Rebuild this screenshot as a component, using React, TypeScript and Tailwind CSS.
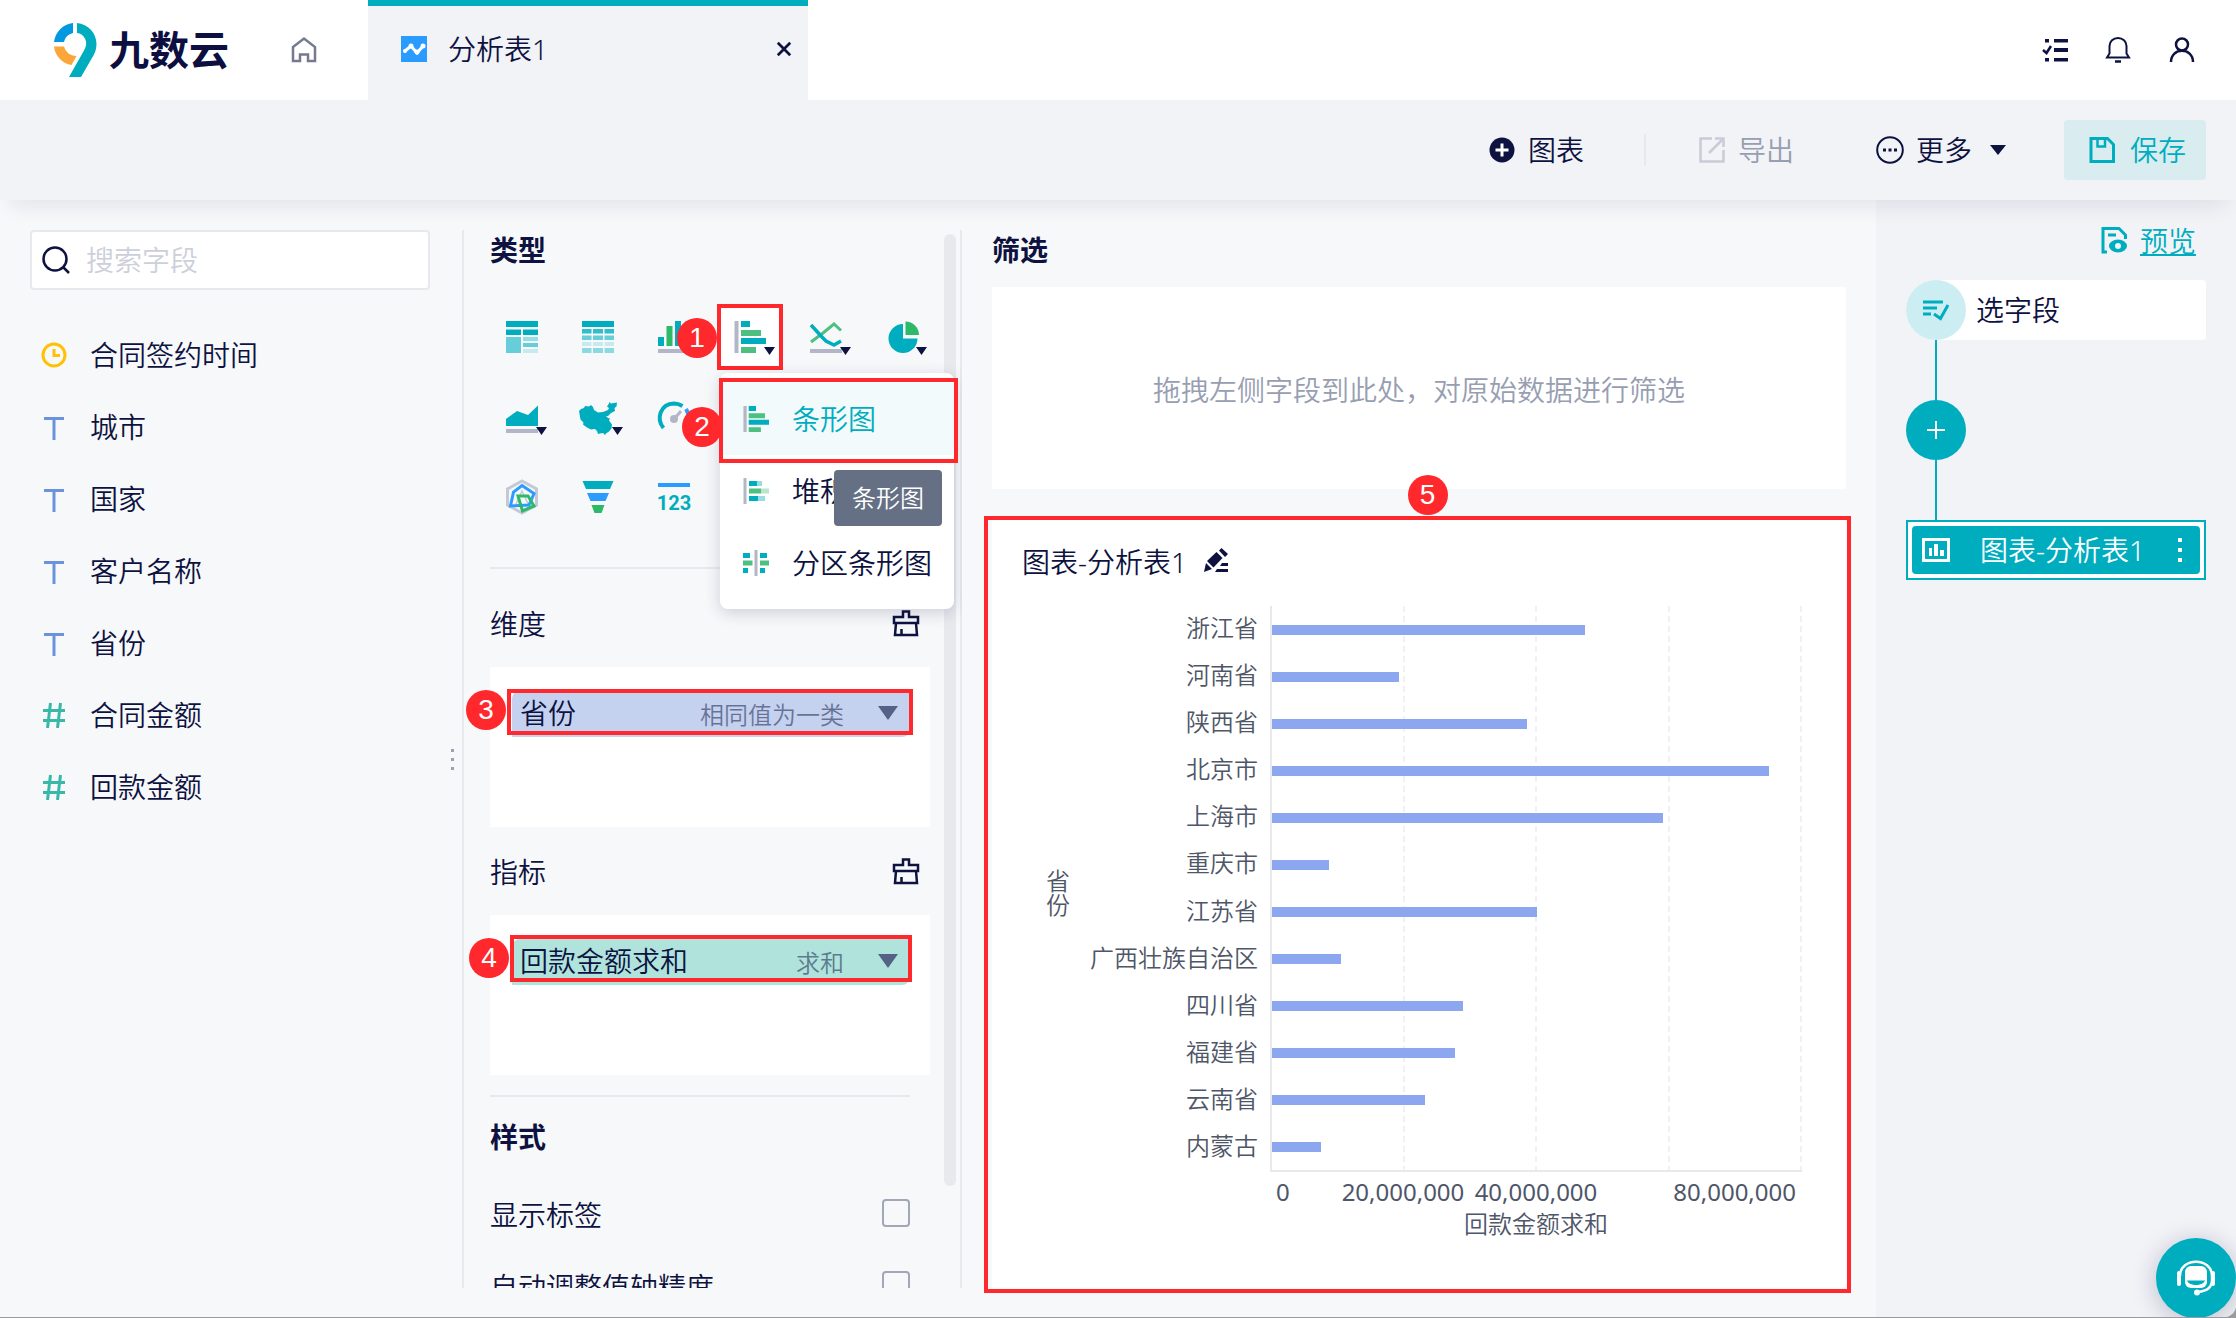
import type { ReactNode } from 'react'

const fields = [
  { type: 'date', label: '合同签约时间' },
  { type: 'text', label: '城市' },
  { type: 'text', label: '国家' },
  { type: 'text', label: '客户名称' },
  { type: 'text', label: '省份' },
  { type: 'number', label: '合同金额' },
  { type: 'number', label: '回款金额' },
]

const AXIS_MAX = 80000000

const chartData = [
  { name: '浙江省', value: 47200000 },
  { name: '河南省', value: 19200000 },
  { name: '陕西省', value: 38500000 },
  { name: '北京市', value: 75000000 },
  { name: '上海市', value: 59000000 },
  { name: '重庆市', value: 8600000 },
  { name: '江苏省', value: 40000000 },
  { name: '广西壮族自治区', value: 10400000 },
  { name: '四川省', value: 28800000 },
  { name: '福建省', value: 27600000 },
  { name: '云南省', value: 23100000 },
  { name: '内蒙古', value: 7400000 },
]

const TEAL = '#00adbf'
const GREEN = '#4dbf80'
const GREY = '#b3b6c6'

function Badge({ n, className }: { n: number; className: string }) {
  return (
    <span
      className={`absolute z-40 flex size-10 items-center justify-center rounded-full bg-[#ff282c] font-['Liberation_Sans',sans-serif] text-[28px] leading-10 text-white ${className}`}
    >
      {n}
    </span>
  )
}

function Logo() {
  return (
    <a href="#" className="flex items-center gap-3 text-[40px] leading-[50px] font-bold text-[#0c0f40]">
      <svg width="43" height="54" viewBox="0 0 43 54" aria-hidden="true">
        <path fill={TEAL} d="M23 0C34 1 42.5 10 42.5 21c0 6-2 10-4.500 14L27 54H15L30 27.500c2.300-4 3-7.500 1.300-11.200C29.700 12.500 26.500 10.300 23 10Z" />
        <path fill="#0098e0" d="M19 0V10A12 12 0 0 0 10 19H0A21.500 21.500 0 0 1 19 0Z" />
        <path fill="#fba63a" d="M0 23.500H10A12 12 0 0 0 22.500 33L17.500 42A21 21 0 0 1 0 23.500Z" />
      </svg>
      <span>九数云</span>
    </a>
  )
}

function FieldIcon({ type }: { type: string }) {
  if (type === 'date') {
    return (
      <svg width="26" height="26" viewBox="0 0 26 26" fill="none" stroke="#ffc100" aria-hidden="true">
        <circle cx="13" cy="13" r="11" strokeWidth="3" />
        <path d="M13 7v6.500h6" strokeWidth="3" />
      </svg>
    )
  }
  if (type === 'text') {
    return (
      <svg width="26" height="26" viewBox="0 0 26 26" fill="none" stroke="#6b93dc" strokeWidth="3" aria-hidden="true">
        <path d="M3 4.500h20M13 4.500V26" />
      </svg>
    )
  }
  return (
    <svg width="26" height="26" viewBox="0 0 26 26" fill="none" stroke="#37b8a8" strokeWidth="3" aria-hidden="true">
      <path d="M2 8.500h22M2 18.500h22M9.500 1 6.500 26M19.500 1 16.500 26" />
    </svg>
  )
}

function BarIcon({ size = 32 }: { size?: number }) {
  return (
    <svg width={size} height={size} viewBox="0 0 32 32" aria-hidden="true">
      <path fill={GREY} d="M.5 0h4v32h-4z" />
      <path fill={TEAL} d="M7 0h9v6H7zM7 17h25v6H7z" />
      <path fill={GREEN} d="M7 9h20v6H7zM7 26h15v6H7z" />
    </svg>
  )
}

function StackedBarIcon() {
  return (
    <svg width="26" height="26" viewBox="0 0 26 26" aria-hidden="true">
      <path fill={GREY} d="M.5 0h3v26h-3z" />
      <path fill={TEAL} d="M6 3h8v5H6zM6 18h9v5H6z" />
      <path fill="#99dde4" d="M14 3h5v5h-5zM15 18h7v5h-7z" />
      <path fill={GREEN} d="M6 10.500h12v5H6z" />
      <path fill="#b8e5cc" d="M18 10.500h8v5h-8z" />
    </svg>
  )
}

function SplitBarIcon() {
  return (
    <svg width="26" height="26" viewBox="0 0 26 26" aria-hidden="true">
      <path fill={GREY} d="M11.500 0h3v26h-3z" />
      <path fill={TEAL} d="M0 3h7v5H0zM17 3h7v5h-7zM0 18h5v5H0zM17 18h5v5h-5z" />
      <path fill={GREEN} d="M0 10.500h9.500v5H0zM17 10.500h9v5h-9z" />
    </svg>
  )
}

function TypeSvg({ children }: { children: ReactNode }) {
  return (
    <svg width="32" height="32" viewBox="0 0 32 32" className="overflow-visible" aria-hidden="true">
      {children}
    </svg>
  )
}

const chartTypes: { name: string; caret?: boolean; newRow?: boolean; icon: ReactNode }[] = [
  {
    name: '分组表',
    icon: (
      <TypeSvg>
        <path fill={TEAL} d="M0 0h32v6H0zM0 8.500h15V14H0zM17 8.500h15V14H17z" />
        <path fill="#66ced9" d="M0 16h15v16H0zM17 22h15v4H17z" />
        <path fill="#99dde4" d="M17 16h15v4H17z" />
        <path fill="#c8eaee" d="M17 28h15v4H17z" />
      </TypeSvg>
    ),
  },
  {
    name: '明细表',
    icon: (
      <TypeSvg>
        <path fill={TEAL} d="M0 0h32v6H0z" />
        <path fill="#33bdcb" d="M0 8h9.500v4.500H0zM11 8h10v4.500H11zM22.500 8H32v4.500h-9.500z" />
        <path fill="#66ced9" d="M0 14.500h9.500V19H0zM11 14.500h10V19H11zM22.500 14.500H32V19h-9.500z" />
        <path fill="#c8eaee" d="M0 21h9.500v4H0zM11 21h10v4H11zM22.500 21H32v4h-9.500z" />
        <path fill="#8bdae2" d="M0 27h9.500v5H0zM11 27h10v5H11zM22.500 27H32v5h-9.500z" />
      </TypeSvg>
    ),
  },
  {
    name: '柱形图',
    icon: (
      <TypeSvg>
        <path fill={GREY} d="M0 28h32v4H0z" />
        <path fill={TEAL} d="M0 16h6v9H0zM17 0h6v25h-6z" />
        <path fill="#2cb968" d="M8.500 5h6v20h-6z" />
      </TypeSvg>
    ),
  },
  { name: '条形图', caret: true, icon: <BarIcon /> },
  {
    name: '折线图',
    caret: true,
    icon: (
      <TypeSvg>
        <path fill={GREY} d="M0 28h32v4H0z" />
        <path fill="none" stroke={GREEN} strokeWidth="3" d="m1 21 12-9L24 3l7 6.500" />
        <path fill="none" stroke={TEAL} strokeWidth="3.500" d="m1 4 11 12 4 4 8 4 7-4" />
      </TypeSvg>
    ),
  },
  {
    name: '饼图',
    caret: true,
    icon: (
      <TypeSvg>
        <path fill={TEAL} d="M17 3a14.500 14.500 0 1 0 14.500 14.500H17Z" />
        <path fill="#2cb968" d="M19.500.5V14H33A13.500 13.500 0 0 0 19.500.5Z" />
      </TypeSvg>
    ),
  },
  {
    name: '面积图',
    caret: true,
    icon: (
      <TypeSvg>
        <path fill={TEAL} d="M0 18 11 10l11 4L32 4.500V25H0z" />
        <path fill={GREY} d="M0 28h32v4H0z" />
      </TypeSvg>
    ),
  },
  {
    name: '地图',
    caret: true,
    icon: (
      <TypeSvg>
        <path
          fill={TEAL}
          d="m-3 10 2-2 3-1 1-2 4 .5 2-1.500 2 2 1 3 4 2.500 5-.5 5-2 1-2-2-1.500 2-3L27 1l2 1.500 6-1-.5 4-2 1.500.5 3-4 2-3 3h-2l2 2 2 .5-1 2 3 4-.5 4-2.500 3-3 2-1 1.500-2-2-3 .5-2 .5-1-3-2-2-4 .5-4-2-4-3 .5-2-3-3z"
        />
      </TypeSvg>
    ),
  },
  {
    name: '仪表盘',
    icon: (
      <TypeSvg>
        <path fill="none" stroke={TEAL} strokeWidth="4" d="M5.500 27C-2 18 2 3 16 2.500c4 0 6 1 8.500 2.500" />
        <path fill="none" stroke="#2b9cff" strokeWidth="4" d="M28 8c2 3 3 6 2.500 10" />
        <circle cx="16" cy="18" r="4" fill={GREY} />
        <path stroke={GREY} strokeWidth="3" d="m17 17 6-7" />
      </TypeSvg>
    ),
  },
  {
    name: '雷达图',
    newRow: true,
    icon: (
      <TypeSvg>
        <g fill="none">
          <path stroke="#c6c9d5" strokeWidth="3" d="m16 0 14.500 8v16L16 32 1.500 24V8z" />
          <path stroke="#c6c9d5" strokeWidth="1.500" d="m9 25 7-15 7 15" />
          <path stroke="#2b9cff" strokeWidth="3" d="m16 4.500 12 8L23 24 4.500 25 7.500 11z" />
          <path stroke="#2cb968" strokeWidth="3" d="M12 15h10l6 10-11.500 5z" />
        </g>
      </TypeSvg>
    ),
  },
  {
    name: '漏斗图',
    icon: (
      <TypeSvg>
        <path fill={TEAL} d="M.5 0h31l-3.500 8H4z" />
        <path fill="#2b9cff" d="M5 12h22l-3.500 8h-15z" />
        <path fill="#2cb968" d="M9.500 24h13l-3 8h-7z" />
      </TypeSvg>
    ),
  },
  {
    name: '指标卡',
    icon: (
      <span className="flex w-8 flex-col items-center gap-1 pt-1">
        <span className="h-1 w-8 bg-[#2b9cff]" />
        <span className="font-['Roboto',sans-serif] text-xl leading-6 font-bold text-[#00adbf]">123</span>
      </span>
    ),
  },
]

function Caret({ className }: { className: string }) {
  return (
    <svg viewBox="0 0 12 8" preserveAspectRatio="none" fill="currentColor" className={className} aria-hidden="true">
      <path d="M0 0h12L6 8z" />
    </svg>
  )
}

function Header() {
  return (
    <header className="flex h-[100px] shrink-0 items-center bg-white pr-10 pl-[54px]">
      <Logo />
      <button type="button" aria-label="首页" className="ml-[61px] text-[#747a92]">
        <svg width="28" height="28" viewBox="0 0 28 28" fill="none" stroke="currentColor" strokeWidth="2.500" aria-hidden="true">
          <path d="M3 11 14 2.500 25 11v14h-7v-6.500h-8V25H3z" />
        </svg>
      </button>
      <div className="ml-[50px] flex h-full w-[440px] items-center border-t-6 border-[#00adbf] bg-[#f2f3f7] pr-4 pb-2 pl-8">
        <svg width="28" height="28" viewBox="0 0 28 28" aria-hidden="true">
          <path fill="#2b9cff" d="M1 1h26v26H1z" />
          <path d="m5 16 6-5 6 7 6-7" fill="none" stroke="#fff" strokeWidth="3" strokeLinecap="round" />
          <g fill="#fff">
            <circle cx="5" cy="16" r="2" />
            <circle cx="11" cy="11" r="2.500" />
            <circle cx="17" cy="17" r="2.500" />
            <circle cx="23" cy="11" r="2.500" />
          </g>
        </svg>
        <span className="ml-5 flex-1">分析表1</span>
        <button type="button" aria-label="关闭">
          <svg width="16" height="16" viewBox="0 0 18 18" stroke="currentColor" strokeWidth="3" aria-hidden="true">
            <path d="m2 2 14 14M16 2 2 16" />
          </svg>
        </button>
      </div>
      <div className="ml-auto flex items-center gap-9">
        <button type="button" aria-label="任务">
          <svg width="28" height="28" viewBox="0 0 28 28" aria-hidden="true">
            <path fill="currentColor" d="M14 3h14v3.500H14zM14 12h14v4H14zM14 22h14v3.500H14zM5 3h4v3.500H5zM5 22h4v3.500H5z" />
            <path d="m3 14 3.500 3L11 10" fill="none" stroke="currentColor" strokeWidth="2.500" />
          </svg>
        </button>
        <button type="button" aria-label="通知">
          <svg width="28" height="28" viewBox="0 0 28 28" fill="none" stroke="currentColor" strokeWidth="2" aria-hidden="true">
            <path d="M3 21.500h22l-2.500-4V10a8.500 8 0 0 0-17 0v7.500z" />
            <path d="M11 25.500h6" strokeWidth="2.500" />
          </svg>
        </button>
        <button type="button" aria-label="账户">
          <svg width="28" height="28" viewBox="0 0 28 28" fill="none" stroke="currentColor" strokeWidth="2.500" aria-hidden="true">
            <circle cx="14" cy="8.500" r="6" />
            <path d="M3 26c0-15 22-15 22 0" />
          </svg>
        </button>
      </div>
    </header>
  )
}

function Toolbar() {
  return (
    <div className="relative z-10 flex h-[100px] shrink-0 items-center justify-end bg-[#f2f3f7] pr-[30px] shadow-[0_16px_20px_-10px_rgba(20,27,70,0.09)]">
      <button type="button" className="flex items-center gap-3">
        <svg width="28" height="28" viewBox="0 0 28 28" aria-hidden="true">
          <circle cx="14" cy="14" r="12.500" fill="currentColor" />
          <path d="M14 7.500v13M7.500 14h13" stroke="#fff" strokeWidth="3" />
        </svg>
        图表
      </button>
      <span className="ml-[60px] h-8 w-0.5 bg-[#e8e9ed]" />
      <button type="button" className="ml-[52px] flex items-center gap-3 text-[#979eb1]">
        <svg width="28" height="28" viewBox="0 0 28 28" fill="none" stroke="#c9ccd6" strokeWidth="2.500" aria-hidden="true">
          <path d="M14 2.500H2.500v23h23V14M17 2.500h8.500V11M25 3 11 17" />
        </svg>
        导出
      </button>
      <button type="button" className="ml-[82px] flex items-center gap-3">
        <svg width="28" height="28" viewBox="0 0 28 28" aria-hidden="true">
          <circle cx="14" cy="14" r="12.800" fill="none" stroke="currentColor" strokeWidth="2" />
          <path fill="currentColor" d="M7 12.500h3v3H7zM12.500 12.500h3v3h-3zM18 12.500h3v3h-3z" />
        </svg>
        更多
        <Caret className="ml-[6px] h-[10px] w-4" />
      </button>
      <button type="button" className="ml-[58px] flex h-[60px] items-center gap-[14px] rounded bg-[#d9ecef] pr-5 pl-6 text-[#00adbf]">
        <svg width="28" height="28" viewBox="0 0 28 28" fill="none" stroke="currentColor" strokeWidth="3" aria-hidden="true">
          <path d="M3 2.500h16.500l6 6v17H3z" />
          <path d="M9.500 3v7.500H17V3" strokeWidth="2.500" />
        </svg>
        保存
      </button>
    </div>
  )
}

function FieldPanel() {
  return (
    <aside className="flex w-[462px] shrink-0 items-center pr-2 pl-[30px]">
      <div className="h-full flex-1">
        <label className="mr-5 flex h-[60px] items-center gap-4 rounded border-2 border-[#e8e9ed] bg-white pl-[10px]">
          <svg width="28" height="28" viewBox="0 0 28 28" fill="none" stroke="currentColor" strokeWidth="2.500" className="shrink-0" aria-hidden="true">
            <circle cx="13" cy="13" r="11.500" />
            <path d="m21 21 6 6" />
          </svg>
          <input
            type="search"
            aria-label="搜索字段"
            placeholder="搜索字段"
            className="w-full min-w-0 bg-transparent outline-none placeholder:text-[#cdcfda]"
          />
        </label>
        <ul className="mt-[29px]">
          {fields.map((field) => (
            <li key={field.label} className="flex h-[72px] items-center gap-[23px] pl-[11px]">
              <FieldIcon type={field.type} />
              {field.label}
            </li>
          ))}
        </ul>
      </div>
      <div className="flex w-1 flex-col items-center gap-[6px]">
        <span className="size-[3px] bg-[#9aa1b3]" />
        <span className="size-[3px] bg-[#9aa1b3]" />
        <span className="size-[3px] bg-[#9aa1b3]" />
      </div>
    </aside>
  )
}

function BarTypeMenu() {
  return (
    <div className="absolute top-[66px] left-0 z-30 w-[234px] rounded-lg bg-white py-[10px] text-left shadow-[0_4px_16px_rgba(20,27,70,0.18)]">
      <button type="button" className="relative flex h-[72px] w-full items-center gap-[23px] bg-[#f2fafb] pl-[23px] text-[#00adbf]">
        <BarIcon size={26} />
        条形图
        <span className="absolute -top-[5px] -right-1 -bottom-2 -left-px border-4 border-[#ff282c]" />
        <Badge n={2} className="top-6 -left-[38px]" />
      </button>
      <button type="button" className="flex h-[72px] w-full items-center gap-[23px] pl-[23px] whitespace-nowrap">
        <StackedBarIcon />
        堆积
      </button>
      <button type="button" className="flex h-[72px] w-full items-center gap-[23px] pl-[23px] whitespace-nowrap">
        <SplitBarIcon />
        分区条形图
      </button>
      <div
        role="tooltip"
        className="absolute top-[97px] right-3 flex h-14 w-[108px] items-center justify-center rounded bg-[#657085] text-2xl text-white"
      >
        条形图
      </div>
    </div>
  )
}

function ClearIcon() {
  return (
    <button type="button" aria-label="清空">
      <svg width="28" height="28" viewBox="0 0 28 28" fill="none" stroke="currentColor" strokeWidth="2.500" aria-hidden="true">
        <path d="M11 8V2.500h6V8h9v6H2V8zM4 14 3 26h22l-1-12M9.500 26v-6" />
      </svg>
    </button>
  )
}

interface DropZoneProps {
  title: string
  name: string
  method: string
  n: number
  chipClass: string
  frameClass: string
  badgeClass: string
}

function DropZone({ title, name, method, n, chipClass, frameClass, badgeClass }: DropZoneProps) {
  return (
    <section>
      <div className="flex h-[88px] items-center justify-between pr-[10px]">
        <h3 className="pt-[2px]">{title}</h3>
        <ClearIcon />
      </div>
      <div className="h-40 bg-white pt-6 pr-5 pl-[22px]">
        <div className={`relative flex h-[46px] w-full items-center rounded-tl-lg rounded-br-lg pr-3 pb-[2px] pl-2 ${chipClass}`}>
          <span className="flex-1">{name}</span>
          <span className="pt-1 text-2xl opacity-50">{method}</span>
          <button type="button" aria-label={`${name}设置`} className="ml-[34px] text-[#556185]">
            <Caret className="h-[14px] w-5" />
          </button>
          <span className={`absolute border-4 border-[#ff282c] ${frameClass}`} />
          <Badge n={n} className={badgeClass} />
        </div>
      </div>
    </section>
  )
}

function StyleOption({ label }: { label: string }) {
  return (
    <label className="flex h-[72px] items-center justify-between">
      {label}
      <input type="checkbox" className="mb-1 size-7 appearance-none rounded border-2 border-[#9fa7b8] checked:bg-[#00adbf]" />
    </label>
  )
}

function ConfigPanel() {
  return (
    <section className="relative w-[500px] shrink-0 border-x-2 border-[#e8e9ed] pr-[30px] pl-[26px]">
      <h2 className="h-10 leading-10 font-bold">类型</h2>
      <div className="mt-[37px] ml-[2px] grid grid-cols-[repeat(6,60px)] gap-x-4 gap-y-5">
        {chartTypes.map((type) => (
          <div
            key={type.name}
            className={`relative size-[60px] ${type.name === '条形图' ? 'bg-white' : ''} ${type.newRow ? 'col-start-1' : ''}`}
          >
            <button type="button" aria-label={type.name} className="flex size-full items-center justify-center">
              {type.icon}
              {type.caret && <Caret className="absolute top-10 left-11 h-2 w-[11px]" />}
            </button>
            {type.name === '条形图' && (
              <>
                <span className="absolute -inset-[3px] border-4 border-[#ff282c]" />
                <Badge n={1} className="top-[11px] -left-[43px]" />
                <BarTypeMenu />
              </>
            )}
          </div>
        ))}
      </div>
      <hr className="mt-10 mr-5 border-t-2 border-[#e8e9ed]" />
      <div className="mt-[10px]">
        <DropZone
          title="维度"
          name="省份"
          method="相同值为一类"
          n={3}
          chipClass="bg-[#c4d2f0]"
          frameClass="-top-[2px] bottom-[2px] -left-[5px] -right-[3px]"
          badgeClass="-top-[1px] -left-[46px]"
        />
        <DropZone
          title="指标"
          name="回款金额求和"
          method="求和"
          n={4}
          chipClass="bg-[#afe3dc]"
          frameClass="-top-1 bottom-[3px] -left-[2px] -right-[2px]"
          badgeClass="-top-[1px] -left-[43px]"
        />
      </div>
      <div className="absolute top-1 right-1 h-[90%] w-3 rounded-full bg-[#e8e9ed]" />
      <hr className="mt-5 mr-5 border-t-2 border-[#e8e9ed]" />
      <h2 className="mt-5 h-10 leading-10 font-bold">样式</h2>
      <div className="mt-[22px] mr-5">
        <StyleOption label="显示标签" />
        <StyleOption label="自动调整值轴精度" />
      </div>
    </section>
  )
}

function BarChart() {
  return (
    <div className="flex min-h-0 flex-1 flex-col text-2xl leading-8 text-[#4e5668]">
      <div className="flex min-h-0 flex-1">
        <div className="flex w-7 items-center pt-2">
          <span className="w-6 leading-6">省份</span>
        </div>
        <div className="flex w-[184px] flex-col text-right">
          {chartData.map((row) => (
            <span key={row.name} className="flex flex-1 items-center justify-end pb-[4px] whitespace-nowrap">
              {row.name}
            </span>
          ))}
        </div>
        <div className="relative ml-3 flex flex-1 flex-col border-b-2 border-l-2 border-[#e8e9ed]">
          <div className="absolute inset-0 grid grid-cols-4">
            {[1, 2, 3, 4].map((line) => (
              <span
                key={line}
                className="ml-auto w-0.5 bg-[repeating-linear-gradient(to_bottom,#f1f1f5_0_6px,transparent_6px_10px)]"
              />
            ))}
          </div>
          {chartData.map((row) => (
            <div key={row.name} className="relative flex flex-1 items-center">
              <div className="h-[10px] bg-[#8ca7f0]" style={{ width: `${(row.value / AXIS_MAX) * 100}%` }} />
            </div>
          ))}
        </div>
      </div>
      <div className="ml-[224px] pt-1">
        <div className="grid grid-cols-8 font-normal">
          <span className="pl-[6px]">0</span>
          <span className="col-span-2 text-center">20,000,000</span>
          <span className="col-span-2 text-center">40,000,000</span>
          <span className="col-span-3 pr-[6px] text-right">80,000,000</span>
        </div>
        <p className="text-center">回款金额求和</p>
      </div>
    </div>
  )
}

function Workspace() {
  return (
    <main className="flex min-w-0 flex-1 flex-col px-[30px]">
      <h2 className="h-10 leading-10 font-bold">筛选</h2>
      <div className="mt-[17px] flex h-[202px] shrink-0 items-center justify-center bg-white pt-1 text-[#979eb1]">
        拖拽左侧字段到此处，对原始数据进行筛选
      </div>
      <section className="relative mt-[30px] flex min-h-0 flex-1 flex-col bg-white pt-[22px] pr-11 pb-12 pl-[30px]">
        <span className="absolute -top-[3px] -right-[5px] -bottom-[5px] -left-2 border-4 border-[#ff282c]" />
        <Badge n={5} className="-top-11 left-[51%] -translate-x-1/2" />
        <div className="relative mb-[23px] flex h-[42px] items-center gap-4">
          <h3>图表-分析表1</h3>
          <button type="button" aria-label="重命名">
            <svg width="26" height="26" viewBox="0 0 26 26" fill="currentColor" className="mb-1" aria-hidden="true">
              <path d="m4 14 9.500-9 6 6-9 9.500zM16 3.500 18.500 1 25 7l-3 3zM3 16l6 6-8 3zM14 22h11v3H12zM19 16h6v3h-8z" />
            </svg>
          </button>
        </div>
        <div className="flex min-h-0 flex-1 flex-col pl-6">
          <BarChart />
        </div>
      </section>
    </main>
  )
}

function FlowPanel() {
  return (
    <aside className="-mt-[30px] -mb-[29px] w-[360px] shrink-0 bg-[#f2f3f7] px-[30px] pt-5">
      <div className="flex h-[60px] items-start justify-end gap-3 pr-[10px] text-[#00adbf]">
        <svg width="28" height="28" viewBox="0 0 28 28" className="mt-[6px]" aria-hidden="true">
          <g fill="none" stroke="currentColor" strokeWidth="3">
            <path d="M7 26H3V2.500h16L25.500 9v4" />
            <path d="M8 9h8" />
          </g>
          <ellipse cx="18" cy="20" rx="9" ry="6.500" fill="currentColor" />
          <circle cx="18" cy="20" r="3" fill="#f2f3f7" />
        </svg>
        <a href="#preview" className="leading-[42px] underline decoration-2 underline-offset-2">
          预览
        </a>
      </div>
      <div className="flex h-[60px] items-center rounded-l-[30px] rounded-r bg-white">
        <span className="flex size-[60px] items-center justify-center rounded-full bg-[#cceef2]">
          <svg width="28" height="24" viewBox="0 0 28 24" fill="none" stroke={TEAL} strokeWidth="3" aria-hidden="true">
            <path d="M1 4h20M1 10h14M1 16h8M12 16l6.500 4.500L26 7" />
          </svg>
        </span>
        <span className="ml-[10px]">选字段</span>
      </div>
      <div className="ml-[29px] h-[60px] w-0.5 bg-[#00adbf]" />
      <button type="button" aria-label="添加步骤" className="flex size-[60px] items-center justify-center rounded-full bg-[#00adbf]">
        <svg width="20" height="20" viewBox="0 0 20 20" stroke="#fff" strokeWidth="2" aria-hidden="true">
          <path d="M10 1v18M1 10h18" />
        </svg>
      </button>
      <div className="ml-[29px] h-[60px] w-0.5 bg-[#00adbf]" />
      <div className="border-2 border-[#00adbf] bg-white p-1">
        <div className="flex h-12 items-center rounded bg-[#00adbf] pr-[18px] pl-[10px] text-white">
          <svg width="28" height="24" viewBox="0 0 28 24" aria-hidden="true">
            <path fill="none" stroke="currentColor" strokeWidth="3" d="M1.500 1.500h25v21h-25z" />
            <path fill="currentColor" d="M7 10h3v8H7zM12 6h4v12h-4zM18 12h4v6h-4z" />
          </svg>
          <span className="flex-1 pl-[30px]">图表-分析表1</span>
          <button type="button" aria-label="更多操作" className="flex flex-col gap-[6px]">
            <span className="size-1 bg-white" />
            <span className="size-1 bg-white" />
            <span className="size-1 bg-white" />
          </button>
        </div>
      </div>
    </aside>
  )
}

export default function App() {
  return (
    <div className="h-screen bg-[#9a9b9d] pb-px font-['Noto_Sans','Noto_Sans_CJK_SC',sans-serif] text-[28px] leading-[42px] font-[350] text-[#0d1240]">
      <div className="relative flex h-full flex-col overflow-hidden rounded-br-xl bg-[#f7f8fa]">
        <Header />
        <Toolbar />
        <div className="flex min-h-0 flex-1 pt-[30px] pb-[29px]">
          <FieldPanel />
          <div className="flex min-h-0 overflow-hidden">
            <ConfigPanel />
          </div>
          <Workspace />
          <FlowPanel />
        </div>
        <button
          type="button"
          aria-label="在线客服"
          className="absolute right-0 -bottom-px z-20 flex size-20 items-center justify-center rounded-full bg-[#00adbf] shadow-[0_4px_24px_rgba(20,27,70,0.25)]"
        >
          <svg width="40" height="38" viewBox="0 0 40 38" fill="none" aria-hidden="true">
            <rect x="9" y="7" width="22" height="22" rx="6" fill="#fff" />
            <path d="M11 21.500h18c-2 6-16 6-18 0z" fill={TEAL} />
            <path d="M4 17C4 -2 36 -2 36 17v4c0 6-4 11-14 12" stroke="#fff" strokeWidth="2.500" />
            <path d="M3 14v11M37 14v11" stroke="#fff" strokeWidth="4" strokeLinecap="round" />
            <circle cx="21" cy="33.500" r="3" fill="#fff" />
          </svg>
        </button>
      </div>
    </div>
  )
}
